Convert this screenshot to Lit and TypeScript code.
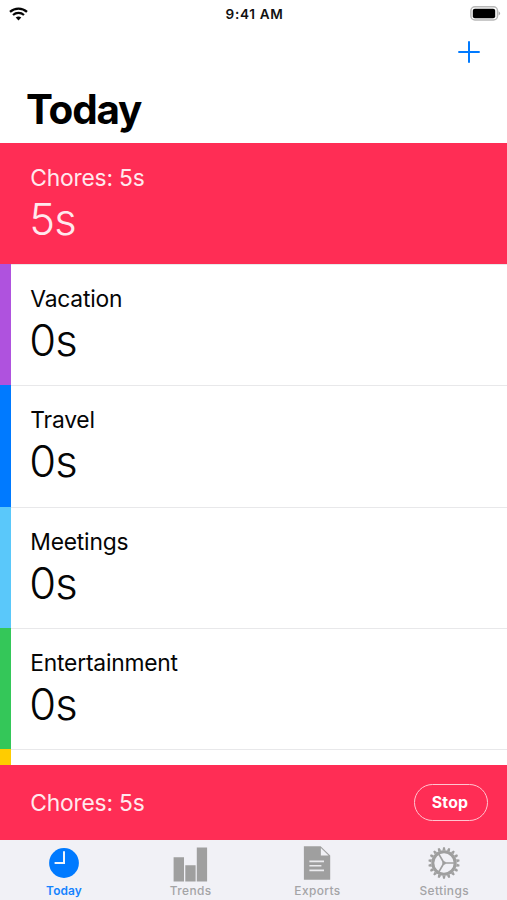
import { LitElement, html, css, svg } from "lit";
import { customElement, property } from "lit/decorators.js";

@customElement("activity-row")
class ActivityRow extends LitElement {
  @property() name = "";
  @property() time = "";
  @property() color = "";
  @property({ type: Boolean, reflect: true }) active = false;

  static styles = css`
    :host {
      display: flex;
      flex: none;
      height: 121.35px;
      box-sizing: border-box;
      color: #050505;
    }
    .stripe {
      width: 10.7px;
      flex: none;
    }
    .body {
      flex: 1;
      padding: 19px 0 0 19.6px;
      box-sizing: border-box;
      border-top: 1px solid #e8e8ea;
    }
    :host([active]) {
      background: #ff2d55;
      color: #ffe9ed;
    }
    :host([active]) .body {
      border-top-color: transparent;
    }
    .name {
      font-size: 22.8px;
      line-height: 30px;
      letter-spacing: -0.2px;
    }
    .time {
      margin-left: -1px;
      font-size: 43.5px;
      line-height: 53px;
      font-weight: 300;
      letter-spacing: -0.9px;
    }
  `;

  render() {
    return html`
      <div class="stripe" style="background:${this.color}"></div>
      <div class="body">
        <div class="name">${this.name}</div>
        <div class="time">${this.time}</div>
      </div>
    `;
  }
}

const teeth = Array.from({ length: 18 }, (_, i) => i * 20);

const icons = {
  today: svg`
    <circle cx="17" cy="17" r="14.9" fill="#007aff"/>
    <path d="M17 5.2V17H7.6" fill="none" stroke="#f0f5fc" stroke-width="2"/>`,
  trends: svg`
    <path d="M-0.4 11.2h10.4v24.4H-0.4zM11.3 19.2h10.3v16.4H11.3zM22.8 1.6h10.3v34H22.8z" fill="#9f9f9f"/>`,
  exports: svg`
    <path d="M3.9 0.2H20.6L30.2 9.6V33.7H3.9z" fill="#9f9f9f"/>
    <path d="M20.9 2V9.4H28.6z" fill="#f1f1f5"/>
    <path d="M9.4 15.4H24M9.4 19.8H21.4M9.4 24.4H24" stroke="#ececef" stroke-width="1.6"/>`,
  settings: svg`
    <g fill="#9f9f9f">
      ${teeth.map(
        (a) => svg`<path d="M15.4 4.4L16.1 1.3H17.9L18.6 4.4z" transform="rotate(${a} 17 17)"/>`
      )}
    </g>
    <g fill="none" stroke="#9f9f9f">
      <circle cx="17" cy="17" r="11.2" stroke-width="3"/>
      <path d="M17 17H27.5M17 17L11.7 7.9M17 17L11.7 26.1" stroke-width="1.7"/>
    </g>
    <circle cx="17" cy="17" r="1.8" fill="#9f9f9f"/>`,
};

const activities = [
  { name: "Chores: 5s", time: "5s", color: "#ff2d55", active: true },
  { name: "Vacation", time: "0s", color: "#af52de" },
  { name: "Travel", time: "0s", color: "#007aff" },
  { name: "Meetings", time: "0s", color: "#5ac8fa" },
  { name: "Entertainment", time: "0s", color: "#34c759" },
  { name: "", time: "", color: "#ffcc00" },
];

const tabs = [
  { label: "Today", icon: icons.today, selected: true },
  { label: "Trends", icon: icons.trends },
  { label: "Exports", icon: icons.exports },
  { label: "Settings", icon: icons.settings },
];

@customElement("app-root")
class AppRoot extends LitElement {
  static styles = css`
    :host {
      display: flex;
      flex-direction: column;
      height: 900px;
      overflow: hidden;
      background: #fff;
      font-family: Inter, "Liberation Sans", sans-serif;
    }
    .status {
      display: grid;
      grid-template-columns: 1fr auto 1fr;
      align-items: center;
      height: 27px;
      flex: none;
      padding: 0 6px 0 8px;
      font-size: 13.6px;
      font-weight: 600;
      letter-spacing: 0.65px;
      color: #111;
    }
    .status svg {
      display: block;
    }
    .wifi {
      margin-left: 1px;
    }
    .battery {
      justify-self: end;
    }
    .nav {
      display: flex;
      justify-content: flex-end;
      align-items: center;
      flex: none;
      height: 50px;
      padding-right: 27px;
    }
    h1 {
      flex: none;
      margin: 0;
      height: 65.7px;
      box-sizing: border-box;
      padding-left: 26px;
      font-size: 40.4px;
      line-height: 65.7px;
      font-weight: 700;
      letter-spacing: -1.2px;
      color: #000;
    }
    .list {
      display: flex;
      flex-direction: column;
      flex: 1;
      min-height: 0;
      overflow: hidden;
    }
    .running {
      display: flex;
      align-items: center;
      justify-content: space-between;
      flex: none;
      height: 75.5px;
      box-sizing: border-box;
      padding: 0 19.5px 0 30.3px;
      background: #ff2d55;
      color: #ffe9ed;
      font-size: 22.8px;
      letter-spacing: -0.2px;
    }
    .stop {
      width: 74px;
      height: 37px;
      box-sizing: border-box;
      border: 1.4px solid #ffc5d0;
      border-radius: 19px;
      padding: 0 1px 0 0;
      background: none;
      color: #fff;
      font: 700 15.8px Inter, "Liberation Sans", sans-serif;
      letter-spacing: 0.2px;
    }
    .tabs {
      display: grid;
      grid-template-columns: repeat(4, 1fr);
      flex: none;
      height: 59.8px;
      background: #f1f1f6;
    }
    .tab {
      display: flex;
      flex-direction: column;
      align-items: center;
      gap: 0.5px;
      padding: 6px 0 0 1.2px;
      color: #a4a4a6;
      font-size: 11.9px;
      line-height: 16px;
      font-weight: 500;
      letter-spacing: 0.4px;
    }
    .tab svg {
      display: block;
      width: 34px;
      height: 36px;
      overflow: visible;
    }
    .selected {
      color: #1583ff;
      font-weight: 600;
      letter-spacing: 0.1px;
    }
  `;

  render() {
    return html`
      <div class="status">
        <svg class="wifi" width="20" height="16" viewBox="0 0 20 16" fill="none" stroke="#050505">
          <path d="M1 5.9A12.6 12.6 0 0 1 18 5.9" stroke-width="2.3"/>
          <path d="M4 9A8.3 8.3 0 0 1 15 9" stroke-width="2.2"/>
          <path d="M6.7 11.6a4.4 4.4 0 0 1 5.6 0L9.5 14.6z" fill="#050505" stroke="none"/>
        </svg>
        <span>9:41 AM</span>
        <svg class="battery" width="31" height="15" viewBox="0 0 31 15">
          <rect x="0.9" y="0.8" width="26.6" height="13.2" rx="4" fill="#fff" stroke="#b8b8b8" stroke-width="1.5"/>
          <rect x="2.8" y="2.8" width="22.4" height="9.4" rx="2" fill="#000"/>
          <path d="M28.6 5.2Q31.6 7.4 28.6 9.6z" fill="#aaa"/>
        </svg>
      </div>
      <div class="nav">
        <svg width="22" height="22" viewBox="0 0 22 22" stroke="#007aff" stroke-width="2">
          <path d="M11 0.3V21.7M0.3 11H21.7"/>
        </svg>
      </div>
      <h1>Today</h1>
      <div class="list">
        ${activities.map(
          (a) => html`<activity-row
            .name=${a.name}
            .time=${a.time}
            .color=${a.color}
            .active=${!!a.active}
          ></activity-row>`
        )}
      </div>
      <div class="running">
        <span>Chores: 5s</span>
        <button class="stop">Stop</button>
      </div>
      <div class="tabs">
        ${tabs.map(
          (t) => html`<div class="tab ${t.selected ? "selected" : ""}">
            <svg viewBox="0 0 34 36">${t.icon}</svg>
            <span>${t.label}</span>
          </div>`
        )}
      </div>
    `;
  }
}
